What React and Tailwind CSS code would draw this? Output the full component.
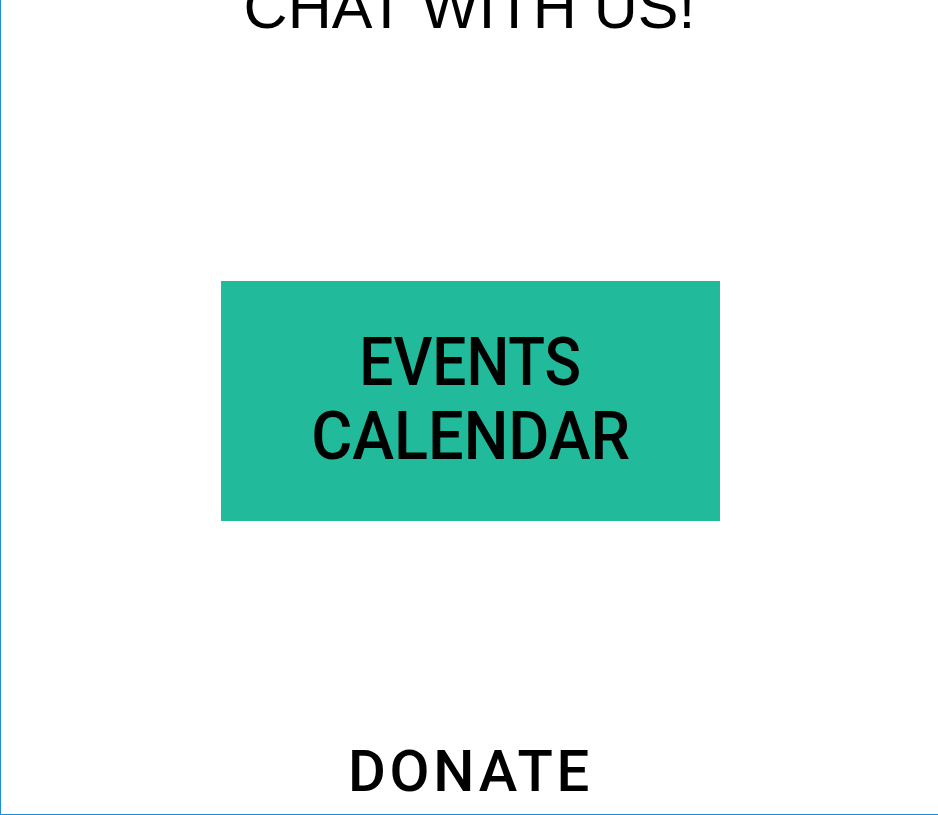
const App = () => {
  return (
    <div
      className="flex h-[815px] w-[938px] flex-col items-center overflow-hidden border-b border-l border-[#1a8fe0] bg-white text-black"
      style={{ fontFamily: '"Liberation Sans", Arial, sans-serif' }}
    >
      {/* heading, cut by top of viewport */}
      <h2 className="mt-[-23px] text-[61px] leading-[61px] font-normal whitespace-nowrap">
        CHAT WITH US!
      </h2>

      {/* events banner */}
      <a
        href="#"
        className="mt-[243px] ml-[2px] flex h-[240px] w-[499px] flex-col items-center justify-center bg-[#21bb9b] pb-1 font-medium"
        style={{ fontFamily: 'Roboto, "Liberation Sans", sans-serif' }}
      >
        <div className="scale-x-[0.9] text-[67px] leading-[74px] whitespace-nowrap">EVENTS</div>
        <div className="scale-x-[0.94] text-[67px] leading-[74px] whitespace-nowrap">CALENDAR</div>
      </a>

      <a
        href="#"
        className="mt-[221px] pl-[2px] text-[58px] leading-[59px] font-medium tracking-[0.065em] whitespace-nowrap"
        style={{ fontFamily: 'Roboto, "Liberation Sans", sans-serif' }}
      >
        DONATE
      </a>
    </div>
  );
};

export default App;
